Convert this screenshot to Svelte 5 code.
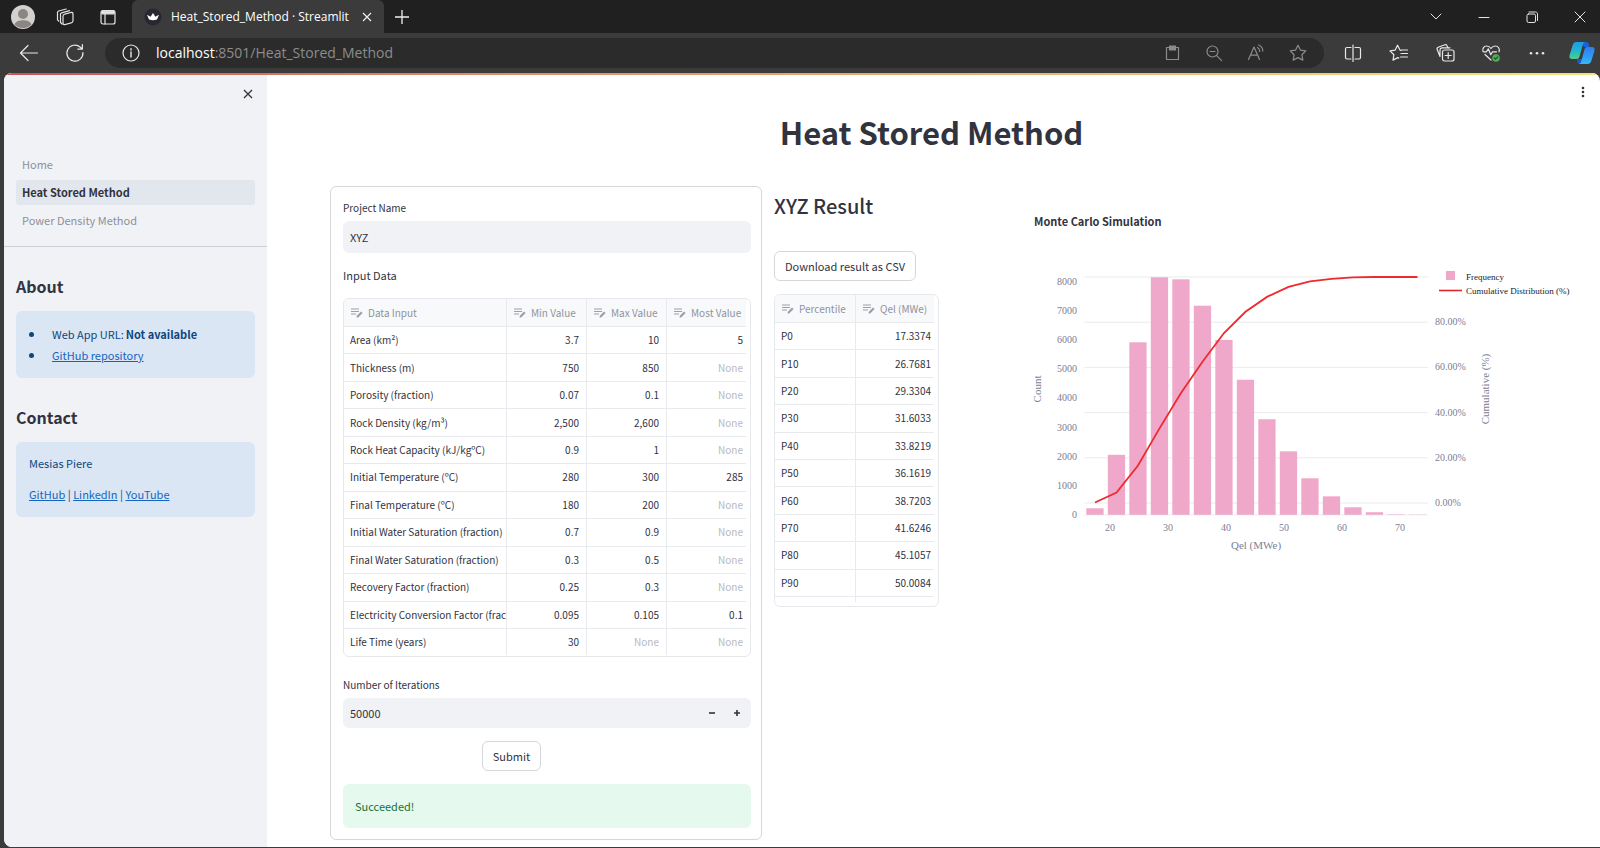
<script>
  const inputs = [
    ['Area (km²)', '3.7', '10', '5'],
    ['Thickness (m)', '750', '850', null],
    ['Porosity (fraction)', '0.07', '0.1', null],
    ['Rock Density (kg/m³)', '2,500', '2,600', null],
    ['Rock Heat Capacity (kJ/kgºC)', '0.9', '1', null],
    ['Initial Temperature (ºC)', '280', '300', '285'],
    ['Final Temperature (ºC)', '180', '200', null],
    ['Initial Water Saturation (fraction)', '0.7', '0.9', null],
    ['Final Water Saturation (fraction)', '0.3', '0.5', null],
    ['Recovery Factor (fraction)', '0.25', '0.3', null],
    ['Electricity Conversion Factor (fraction)', '0.095', '0.105', '0.1'],
    ['Life Time (years)', '30', null, null]
  ];

  const percentiles = [
    ['P0', '17.3374'],
    ['P10', '26.7681'],
    ['P20', '29.3304'],
    ['P30', '31.6033'],
    ['P40', '33.8219'],
    ['P50', '36.1619'],
    ['P60', '38.7203'],
    ['P70', '41.6246'],
    ['P80', '45.1057'],
    ['P90', '50.0084']
  ];

  const counts = [230, 2065, 5925, 8155, 8085, 7180, 6005, 4640, 3285, 2185, 1260, 640, 265, 95, 20, 12];
  const cumulative = [0.2, 4.6, 16.6, 33, 48.7, 62.5, 75.2, 84.6, 91.2, 95.6, 98.1, 99.2, 99.8, 100, 100, 100];

  // Chart scales, in viewBox units.
  const base = 265;
  const countY = (n) => base - n * 0.02915;
  const cumY = (p) => 253 - p * 2.26;
  const barX = (i) => 52.3 + i * 21.5;
  const line = cumulative.map((p, i) => `${barX(i) + 8.7},${cumY(p)}`).join(' ');

  let projectName = $state('XYZ');
  let iterations = $state(50000);
</script>

{#snippet editIcon()}
  <svg class="edit" viewBox="0 0 12 10" aria-hidden="true">
    <path d="M0 1h8M0 3.5h8M0 6h5" stroke="currentColor" stroke-width="1.2" fill="none" />
    <path d="M5.6 9.6V8L10 3.6l1.6 1.5L7.2 9.6z" fill="currentColor" />
  </svg>
{/snippet}

<div class="browser">
  <div class="tabstrip">
    <svg class="avatar" viewBox="0 0 24 24" aria-hidden="true">
      <circle cx="12" cy="12" r="12" fill="#d3d1ce" />
      <circle cx="12" cy="9" r="5" fill="#8a8683" />
      <path d="M3.5 19.5C5 16 8 15.2 12 15.2s7 .8 8.500 4.300A11.500 11.500 0 0 1 12 23a11.500 11.500 0 0 1-8.500-3.500z" fill="#8a8683" />
    </svg>
    <svg class="ic spaces" viewBox="0 0 20 20" aria-hidden="true">
      <rect x="8" y="5.500" width="10" height="10.500" rx="1.800" transform="skewY(-14) translate(0 4)" />
      <path d="M5.500 15.500V7.300c0-.8.500-1.300 1.200-1.500l7.800-2.100" />
      <path d="M2.500 12.800V5.500C2.500 4.700 3 4.200 3.700 4l7.500-2M2.500 12.800l1.200 1.200M5.500 15.500l1.500 1.500" />
    </svg>
    <svg class="ic pane" viewBox="0 0 20 20" aria-hidden="true">
      <rect x="3" y="3.500" width="14" height="13.500" rx="2" />
      <path d="M3.500 5.500h13M7 7v10" />
      <path d="M4 4.200h12v2.600H4z" fill="currentColor" />
    </svg>
    <div class="tab">
      <svg class="favicon" viewBox="0 0 18 18" aria-hidden="true">
        <circle cx="9" cy="9" r="8.500" fill="#262730" />
        <path d="M3 6.800l3.600 1.900L9 5l2.400 3.700L15 6.800l-2 4.800a12 12 0 0 1-8 0z" fill="#fff" />
      </svg>
      <span>Heat_Stored_Method · Streamlit</span>
      <button aria-label="Close tab"><svg class="tabx" viewBox="0 0 10 10"><path d="M1 1l8 8M9 1l-8 8" /></svg></button>
    </div>
    <button class="newtab" aria-label="New tab"><svg viewBox="0 0 16 16"><path d="M8 1v14M1 8h14" /></svg></button>
    <div class="window">
      <button aria-label="Tab actions"><svg class="ic" viewBox="0 0 20 20"><path d="M5 7l5 5 5-5" /></svg></button>
      <button aria-label="Minimize"><svg class="ic" viewBox="0 0 20 20"><path d="M5 10.500h10" /></svg></button>
      <button aria-label="Restore"><svg class="ic" viewBox="0 0 20 20"><rect x="5" y="7" width="8.500" height="8.500" rx="1.500" /><path d="M7 5h6.500c1.200 0 2 .8 2 2v6.500" /></svg></button>
      <button aria-label="Close window"><svg class="ic" viewBox="0 0 20 20"><path d="M5 5l10 10M15 5L5 15" /></svg></button>
    </div>
  </div>

  <div class="toolbar">
    <button aria-label="Back"><svg class="ic" viewBox="0 0 20 20"><path d="M18.500 10H2M9 2.500L1.500 10 9 17.500" /></svg></button>
    <button class="refresh" aria-label="Refresh"><svg class="ic" viewBox="0 0 20 20"><path d="M17.900 9.500a8 8 0 1 1-2.600-5.300l1.700 1.600M17.400 1.500v4.600h-4.600" /></svg></button>
    <div class="address">
      <svg class="ic bright" viewBox="0 0 20 20" aria-hidden="true"><circle cx="10" cy="10" r="8" /><path d="M10 9v5M10 5.700v1.300" stroke-width="1.400" /></svg>
      <span class="url"><b>localhost</b>:8501/Heat_Stored_Method</span>
      <div class="urlicons">
        <svg class="ic" viewBox="0 0 20 20" aria-hidden="true"><path d="M7.500 4.500H4.500v12h12v-12h-3" /><path d="M7.500 3h6v4h-6z" fill="currentColor" /></svg>
        <svg class="ic" viewBox="0 0 20 20" aria-hidden="true"><circle cx="8.500" cy="8.500" r="5.500" /><path d="M12.700 12.700l5 5M6 8.500h5" /></svg>
        <svg class="ic" viewBox="0 0 20 20" aria-hidden="true"><path d="M2.500 16.500L8 4l5.500 12.500M4.500 12.200h7M11.500 4.500c1.500.8 2.200 2 2.200 4M12.800 2c2.700 1.300 4 3.300 4 6" /></svg>
        <svg class="ic" viewBox="0 0 20 20" aria-hidden="true"><path d="M10 2.200l2.400 4.900 5.400.8-3.900 3.800.9 5.400-4.800-2.500-4.800 2.500.9-5.400-3.900-3.800 5.400-.8z" /></svg>
      </div>
    </div>
    <div class="tools">
      <svg class="ic" viewBox="0 0 20 20" aria-hidden="true"><path d="M8 4.500H4a1.500 1.500 0 0 0-1.500 1.500v8.500A1.500 1.500 0 0 0 4 16h4M12 4.500h4A1.500 1.500 0 0 1 17.500 6v8.500A1.500 1.500 0 0 1 16 16h-4M10 2v16.500" /></svg>
      <svg class="ic" viewBox="0 0 20 20" aria-hidden="true"><path d="M12.200 7.400L11 7.100 8.500 2.200 6.200 7.100l-5.200.8 3.900 3.800-.9 5.400 4.800-2.500 1 .5M12.500 7h6M12 10.500h6.500M11.500 14h7" /></svg>
      <svg class="ic" viewBox="0 0 20 20" aria-hidden="true"><rect x="7.500" y="7" width="11.500" height="11" rx="2" /><path d="M13.200 9.500v6M10.200 12.500h6M5 13.500l-2.800-7c-.4-1 0-1.900 1-2.300l6.600-2.400c1-.3 1.800.1 2.200 1L13.200 5M5 13.500V7c0-1.400.8-2.200 2.200-2.200H15" /></svg>
      <svg class="ic" viewBox="0 0 20 20" aria-hidden="true"><path d="M2 8.500C1 5.500 3 3 5.700 3 7.600 3 9 4 10 5.500 11 4 12.400 3 14.300 3c2.900 0 4.900 2.700 3.700 5.800M2.500 8.800h3l1.800-3 2.500 6 1.700-3h4M4 11.500l6 5.500" /><circle cx="15" cy="15" r="3.800" fill="#4fae55" stroke="none" /><path d="M13.300 15l1.300 1.200 2.200-2.400" stroke="#274d2a" /></svg>
      <svg class="ic" viewBox="0 0 20 20" aria-hidden="true"><g fill="currentColor" stroke="none"><circle cx="4" cy="10.200" r="1.300" /><circle cx="10" cy="10.200" r="1.300" /><circle cx="16" cy="10.200" r="1.300" /></g></svg>
    </div>
    <svg class="copilot" viewBox="0 0 26 24" aria-hidden="true">
      <defs>
        <linearGradient id="ca" x1="0" y1="0" x2="0" y2="1"><stop offset="0" stop-color="#1e9be8" /><stop offset=".5" stop-color="#1fb5cf" /><stop offset="1" stop-color="#4fcf83" /></linearGradient>
        <linearGradient id="cb" x1="0" y1="0" x2="0" y2="1"><stop offset="0" stop-color="#2f7df0" /><stop offset=".6" stop-color="#2f9df5" /><stop offset="1" stop-color="#39b9f2" /></linearGradient>
      </defs>
      <path d="M8 18h6l-1.500 3.500c-.4 1-1.200 1.500-2.200 1.500C8.500 23 8 21 8 18z" fill="#1a55d6" />
      <path d="M12 1h5.500c1.300 0 2 1 2.400 2.500L20.500 6H15z" fill="#1a62dc" />
      <path d="M7.500 1H16c-1.300.3-1.900 1.500-2.300 3l-3.200 11.500C10 17.300 9 18 7.500 18H3c-2 0-3-1.500-2.500-3.500L3.700 4C4.300 2 5.500 1 7.500 1z" fill="url(#ca)" />
      <path d="M18.500 6H23c2 0 3 1.500 2.500 3.500L22.300 20c-.6 2-1.800 3-3.800 3H10c1.300-.3 1.900-1.500 2.300-3l3.200-11.500C16 6.700 17 6 18.500 6z" fill="url(#cb)" />
    </svg>
  </div>

  <div class="page">
    <div class="rainbow"></div>
    <aside>
      <button class="closeside" aria-label="Close sidebar"><svg viewBox="0 0 10 10"><path d="M1 1l8 8M9 1l-8 8" /></svg></button>
      <nav>
        <a href="#home">Home</a>
        <a href="#heat" class="active">Heat Stored Method</a>
        <a href="#power">Power Density Method</a>
      </nav>
      <section>
        <h2>About</h2>
        <ul class="info">
          <li>Web App URL: <strong>Not available</strong></li>
          <li><a href="#repo">GitHub repository</a></li>
        </ul>
        <h2>Contact</h2>
        <div class="info contact">
          <p>Mesias Piere</p>
          <p><a href="#github">GitHub</a> | <a href="#linkedin">LinkedIn</a> | <a href="#youtube">YouTube</a></p>
        </div>
      </section>
    </aside>

    <main>
      <button class="menu" aria-label="Main menu"><svg viewBox="0 0 4 12"><circle cx="2" cy="2" r="1.300" /><circle cx="2" cy="6" r="1.300" /><circle cx="2" cy="10" r="1.300" /></svg></button>
      <h1>Heat Stored Method</h1>
      <div class="columns">
        <form onsubmit={(e) => e.preventDefault()}>
          <label for="project">Project Name</label>
          <input id="project" class="field" type="text" bind:value={projectName} />
          <p class="caption">Input Data</p>
          <div class="frame">
            <table class="inputs">
              <colgroup><col class="c1" /><col class="c2" /><col class="c2" /><col /></colgroup>
              <thead>
                <tr>
                  <th><span>{@render editIcon()}Data Input</span></th>
                  <th><span>{@render editIcon()}Min Value</span></th>
                  <th><span>{@render editIcon()}Max Value</span></th>
                  <th><span>{@render editIcon()}Most Value</span></th>
                </tr>
              </thead>
              <tbody>
                {#each inputs as [name, ...values]}
                  <tr>
                    <td>{name}</td>
                    {#each values as value}
                      <td class="num" class:none={value === null}>{value ?? 'None'}</td>
                    {/each}
                  </tr>
                {/each}
              </tbody>
            </table>
          </div>
          <label class="second" for="iterations">Number of Iterations</label>
          <div class="number">
            <input id="iterations" type="number" bind:value={iterations} />
            <button type="button" aria-label="Decrease" onclick={() => iterations--}><svg viewBox="0 0 8 8"><path d="M1 4h6" /></svg></button>
            <button type="button" aria-label="Increase" onclick={() => iterations++}><svg viewBox="0 0 8 8"><path d="M1 4h6M4 1v6" /></svg></button>
          </div>
          <div class="submit"><button class="btn" type="submit">Submit</button></div>
          <div class="success" role="status">Succeeded!</div>
        </form>

        <section class="result">
          <h2>XYZ Result</h2>
          <button class="btn">Download result as CSV</button>
          <div class="frame small">
            <table class="percentiles">
              <colgroup><col class="p1" /><col /></colgroup>
              <thead>
                <tr>
                  <th><span>{@render editIcon()}Percentile</span></th>
                  <th><span>{@render editIcon()}Qel (MWe)</span></th>
                </tr>
              </thead>
              <tbody>
                {#each percentiles as [name, value]}
                  <tr><td>{name}</td><td class="num">{value}</td></tr>
                {/each}
              </tbody>
              <tfoot><tr><td></td><td></td></tr></tfoot>
            </table>
          </div>
        </section>

        <section class="chart">
          <h3>Monte Carlo Simulation</h3>
          <svg viewBox="0 0 542 320" role="img" aria-label="Monte Carlo Simulation">
            {#each [0, 20, 40, 60, 80, 100] as p}
              <path d="M50.500 {cumY(p)}H394" stroke="#e9ebf0" />
            {/each}
            {#each counts as n, i}
              <rect x={barX(i)} y={countY(n)} width="17.300" height={n * 0.02915} fill="#f0a8ca" />
            {/each}
            <path d="M50.500 265H394" stroke="#e6dfe6" stroke-width=".6" />
            <polyline points={line} fill="none" stroke="#ee2a2e" stroke-width="1.800" />
            <g class="tick">
              {#each [0, 1000, 2000, 3000, 4000, 5000, 6000, 7000, 8000] as n}
                <text x="43" y={countY(n) + 3} text-anchor="end">{n}</text>
              {/each}
              {#each [20, 30, 40, 50, 60, 70] as q, i}
                <text x={76 + i * 58} y="281" text-anchor="middle">{q}</text>
              {/each}
              {#each [0, 20, 40, 60, 80] as p}
                <text x="401" y={cumY(p) + 3}>{p}.00%</text>
              {/each}
            </g>
            <g class="axis">
              <text x="222" y="299" text-anchor="middle">Qel (MWe)</text>
              <text transform="translate(7 139) rotate(-90)" text-anchor="middle">Count</text>
              <text transform="translate(455 139) rotate(-90)" text-anchor="middle">Cumulative (%)</text>
            </g>
            <g class="legend">
              <rect x="412" y="21" width="9" height="9" fill="#f0a8ca" />
              <text x="432" y="30">Frequency</text>
              <path d="M405 40.500h23" stroke="#e0262a" stroke-width="1.600" />
              <text x="432" y="44">Cumulative Distribution (%)</text>
            </g>
          </svg>
        </section>
      </div>
    </main>
  </div>
</div>

<style>
  :global(body) {
    background: #3b3b3b;
  }
  :global(*) {
    box-sizing: border-box;
  }
  .browser {
    display: flex;
    flex-direction: column;
    min-height: 100vh;
    font-family: 'Noto Sans CJK SC', 'Noto Sans', sans-serif;
    font-size: 11px;
    line-height: 18px;
    color: #31333f;
  }
  button,
  input {
    font: inherit;
    color: inherit;
    border: 0;
    background: none;
    padding: 0;
    margin: 0;
  }
  svg {
    display: block;
    flex: none;
  }
  h1, h2, h3, p, ul {
    margin: 0;
    padding: 0;
  }

  .tabstrip {
    display: flex;
    align-items: center;
    height: 33px;
    padding: 0 10px 0 11px;
    background: #202020;
    color: #e4e4e4;
    font-family: 'Open Sans', sans-serif;
    font-size: 12px;
  }
  .ic {
    width: 20px;
    height: 20px;
    fill: none;
    stroke: currentColor;
    stroke-width: 1.2;
    stroke-linecap: round;
    stroke-linejoin: round;
  }
  .avatar {
    width: 24px;
    height: 24px;
  }
  .spaces {
    margin-left: 20px;
  }
  .pane {
    margin: 0 14px 0 23px;
  }
  .tab {
    display: flex;
    align-items: center;
    align-self: stretch;
    width: 252px;
    padding: 0 12px;
    border-radius: 6px 6px 0 0;
    background: #3b3b3b;
    color: #fff;
    white-space: nowrap;
  }
  .tab span {
    flex: 1;
    margin-left: 9px;
  }
  .favicon {
    width: 18px;
    height: 18px;
  }
  .tabx {
    width: 10px;
    height: 10px;
    stroke: #eee;
    stroke-width: 1.2;
  }
  .newtab {
    margin-left: 10px;
  }
  .newtab svg {
    width: 16px;
    height: 16px;
    stroke: #eee;
    stroke-width: 1.3;
  }
  .window {
    display: flex;
    gap: 28px;
    margin-left: auto;
  }
  .window .ic {
    stroke-width: 1;
  }

  .toolbar {
    display: flex;
    align-items: center;
    height: 40px;
    padding: 0 5px 0 19px;
    background: #3b3b3b;
    color: #e8e8e8;
  }
  .refresh {
    margin: 0 20px 0 26px;
  }
  .address {
    display: flex;
    align-items: center;
    flex: 1;
    height: 30px;
    padding: 0 16px;
    border-radius: 15px;
    background: #2b2b2b;
    color: #8c8c8c;
  }
  .bright {
    color: #e8e8e8;
  }
  .url {
    margin-left: 15px;
    font-family: 'Open Sans', sans-serif;
    font-size: 14px;
  }
  .url b {
    font-weight: 400;
    color: #fff;
  }
  .urlicons {
    display: flex;
    gap: 22px;
    margin-left: auto;
  }
  .tools {
    display: flex;
    gap: 26px;
    margin: 0 22px 0 19px;
  }
  .copilot {
    width: 26px;
    height: 24px;
  }

  .page {
    position: relative;
    display: flex;
    flex: 1;
    margin: 0 0 1px 4px;
    border-radius: 8px 8px 0 8px;
    background: #fff;
    overflow: hidden;
  }
  .rainbow {
    position: absolute;
    inset: 0 0 auto;
    height: 2px;
    background: linear-gradient(90deg, #c4545a, #e08a68 30%, #e8b070 60%, #f2e27a);
  }
  aside {
    flex: none;
    width: 263px;
    padding-top: 16px;
    background: #f0f2f6;
  }
  .closeside {
    display: block;
    margin: 0 14px 53px auto;
  }
  .closeside svg {
    width: 10px;
    height: 10px;
    stroke: #31333f;
    stroke-width: 1.3;
  }
  nav {
    display: flex;
    flex-direction: column;
    gap: 3px;
    padding: 0 12px 13px 12px;
    border-bottom: 1px solid #cdd0d7;
  }
  nav a {
    padding: 0 6px;
    border-radius: 3px;
    line-height: 25px;
    color: #8d919b;
    text-decoration: none;
  }
  nav .active {
    background: #e2e6ed;
    color: #31333f;
    font-weight: 600;
  }
  section {
    min-width: 0;
  }
  aside section {
    padding: 26px 12px 0 12px;
  }
  aside h2 {
    margin-bottom: 12px;
    font-size: 16px;
    line-height: 26px;
    font-weight: 600;
  }
  .info {
    margin-bottom: 26px;
    padding: 13px 13px 12px;
    border-radius: 6px;
    background: #dae6f3;
    color: #0f4580;
    line-height: 21px;
    list-style: none;
  }
  .info a {
    color: #1565c0;
  }
  .info li {
    display: flex;
    gap: 2px;
    align-items: center;
  }
  .info li::before {
    content: '';
    width: 5px;
    height: 5px;
    margin-right: 16px;
    border-radius: 50%;
    background: #0f4580;
  }
  .contact {
    display: flex;
    flex-direction: column;
    gap: 10px;
    padding: 11px 13px 12px;
  }

  main {
    display: flex;
    flex-direction: column;
    flex: 1;
    min-width: 0;
    padding: 13px 0 6px;
  }
  .menu {
    align-self: flex-end;
    margin-right: 15px;
  }
  .menu svg {
    width: 4px;
    height: 12px;
    fill: #31333f;
  }
  h1 {
    margin: 14px 4px 34px 0;
    font-size: 31px;
    line-height: 40px;
    font-weight: 700;
    text-align: center;
  }
  .columns {
    display: grid;
    grid-template-columns: minmax(0, 432fr) minmax(0, 248fr) minmax(0, 542fr);
    gap: 12px;
    align-items: start;
    padding: 0 24px 0 63px;
  }
  form {
    padding: 12px 10px 11px 12px;
    border: 1px solid #d6d7da;
    border-radius: 6px;
  }
  label {
    display: block;
    margin-bottom: 4px;
    font-size: 10px;
  }
  .field {
    display: block;
    width: 100%;
    height: 32px;
    padding: 0 7px;
    border-radius: 6px;
    background: #f0f2f6;
  }
  .caption {
    margin: 11px 0 12px;
    line-height: 22px;
  }
  .frame {
    padding: 0 4px 1px 0;
    border: 1px solid #e6e8ec;
    border-radius: 6px;
    overflow: hidden;
  }
  table {
    width: 100%;
    table-layout: fixed;
    border-collapse: separate;
    border-spacing: 0;
    font-size: 10px;
    line-height: 18px;
  }
  .inputs {
    height: 356px;
  }
  .percentiles {
    height: 307px;
  }
  .c1 { width: 163px; }
  .c2 { width: 80px; }
  .p1 { width: 81px; }
  thead tr {
    height: 28px;
  }
  tfoot tr {
    height: 5px;
  }
  th,
  td {
    padding: 0 7px;
    border: 0 solid #e9eaee;
    border-width: 0 1px 1px 0;
    text-align: left;
    font-weight: 400;
    white-space: nowrap;
    overflow: hidden;
  }
  td:first-child {
    padding: 0 0 0 6px;
  }
  th:last-child,
  td:last-child {
    border-right: 0;
  }
  td.num:last-child {
    padding-right: 3px;
  }
  .inputs tbody tr:last-child td,
  tfoot td {
    border-bottom: 0;
  }
  th {
    background: #f8f9fb;
    color: #8f939d;
  }
  th span {
    display: flex;
    align-items: center;
    gap: 5px;
  }
  .edit {
    width: 12px;
    height: 10px;
    color: #9b9fa8;
  }
  .num {
    text-align: right;
  }
  .none {
    color: #b7b9bf;
  }
  .second {
    margin-top: 19px;
  }
  .number {
    display: flex;
    height: 30px;
    padding-right: 2px;
    border-radius: 6px;
    background: #f0f2f6;
  }
  .number input {
    flex: 1;
    min-width: 0;
    padding-left: 7px;
    appearance: textfield;
  }
  .number input::-webkit-inner-spin-button {
    display: none;
  }
  .number button {
    display: grid;
    place-items: center;
    width: 25px;
  }
  .number svg {
    width: 8px;
    height: 8px;
    stroke: #31333f;
    stroke-width: 1.6;
  }
  .btn {
    height: 30px;
    padding: 0 10px;
    border: 1px solid #d6d7da;
    border-radius: 6px;
    background: #fff;
  }
  .submit {
    display: flex;
    margin: 13px 0;
    padding-left: 34%;
  }
  .success {
    padding: 0 12px;
    border-radius: 6px;
    background: #e6f9ee;
    color: #177233;
    line-height: 44px;
  }
  .result {
    padding-top: 6px;
  }
  .result h2 {
    margin-bottom: 31px;
    font-size: 20px;
    line-height: 28px;
    font-weight: 500;
  }
  .small {
    width: 165px;
    margin-top: 13px;
    padding-bottom: 4px;
  }
  .chart {
    padding-top: 24px;
  }
  h3 {
    margin-bottom: 18px;
    font-size: 11px;
    line-height: 22px;
    font-weight: 700;
  }
  .chart svg {
    width: 100%;
    overflow: visible;
    font-family: 'Liberation Serif', serif;
  }
  .tick {
    font-size: 10px;
    fill: #7b8094;
  }
  .axis {
    font-size: 11px;
    fill: #7b8094;
  }
  .legend {
    font-size: 9px;
    fill: #22232b;
  }
</style>
